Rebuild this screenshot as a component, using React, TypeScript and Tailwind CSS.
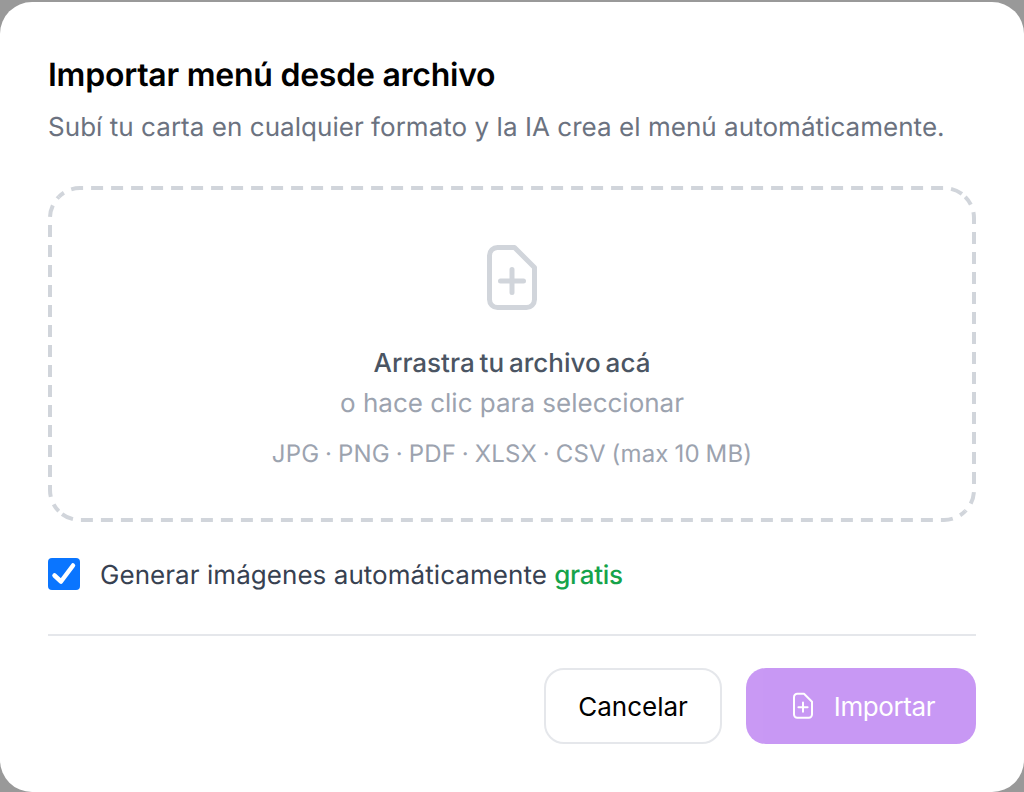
import React, { useState } from "react";

// file with a plus, same outline for the drop zone and the button
const FilePlusIcon = ({ className }: { className?: string }) => (
  <svg viewBox="0 0 60 70" fill="none" stroke="currentColor" strokeWidth="5" strokeLinecap="round" strokeLinejoin="round" className={className}>
    <path d="M15.5 4.5H32.5L52.5 24.5V56.5a8 8 0 0 1-8 8H15.5a8 8 0 0 1-8-8V12.5a8 8 0 0 1 8-8Z" />
    <path d="M30 26.5V49.5M18.5 38H41.5" />
  </svg>
);

// one stroke per side: dash phase differs from side to side on the drop zone
const dashedSides = [
  { d: "M10.79 10.79A30 30 0 0 1 32 2H896A30 30 0 0 1 917.21 10.79", offset: 5.44 },
  { d: "M917.21 10.79A30 30 0 0 1 926 32V304A30 30 0 0 1 917.21 325.21", offset: 2.44 },
  { d: "M917.21 325.21A30 30 0 0 1 896 334H32A30 30 0 0 1 10.79 325.21", offset: 5.44 },
  { d: "M10.79 325.21A30 30 0 0 1 2 304V32A30 30 0 0 1 10.79 10.79", offset: 3.44 },
];

const App: React.FC = () => {
  const [generate, setGenerate] = useState(true);

  return (
    <div className="h-[792px] w-[1024px] bg-[#999999] pt-[2px] font-['Inter',sans-serif] [text-rendering:geometricPrecision]">
      <div className="flex h-[790px] flex-col rounded-[32px] bg-white px-12 pt-[53px]">
        <h2 className="text-[32px] leading-[40px] font-semibold tracking-[-0.25px] text-black">Importar menú desde archivo</h2>
        <p className="mt-[13px] text-[26px] leading-[40px] tracking-[0.04px] text-[#6b7280]">
          Subí tu carta en cualquier formato y la IA crea el menú automáticamente.
        </p>

        <div className="relative mt-[38px] flex h-[336px] flex-col items-center pt-[57px]">
          <svg viewBox="0 0 928 336" fill="none" stroke="#d1d5db" strokeWidth="4" strokeDasharray="12 8" className="absolute inset-0 h-[336px] w-[928px]">
            {dashedSides.map((side) => (
              <path key={side.d} d={side.d} strokeDashoffset={side.offset} />
            ))}
          </svg>
          <FilePlusIcon className="h-[70px] w-[60px] text-[#d1d5db]" />
          <p className="mt-[33px] text-[26px] leading-[36px] font-medium [word-spacing:-2px] text-[#4b5563]">Arrastra tu archivo acá</p>
          <p className="mt-[4px] text-[26px] leading-[36px] text-[#9ca3af]">o hace clic para seleccionar</p>
          <p className="mt-[16px] text-[24px] leading-[32px] tracking-[0.15px] [word-spacing:-1px] text-[#9ca3af]">JPG · PNG · PDF · XLSX · CSV (max 10 MB)</p>
        </div>

        <label className="mt-[35px] flex h-[36px] items-center gap-5 text-[26px] tracking-[0.05px] text-[#374151]">
          <input type="checkbox" className="sr-only" checked={generate} onChange={(e) => setGenerate(e.target.checked)} />
          <span className={`-mt-[2px] flex h-8 w-8 items-center justify-center rounded-[4px] ${generate ? "bg-[#0a75ff]" : "border-2 border-gray-400"}`}>
            {generate && (
              <svg viewBox="0 0 32 32" className="h-8 w-8" fill="none" stroke="white" strokeWidth="4.5" strokeLinecap="round" strokeLinejoin="round">
                <path d="M6.5 17.5L13 23.5L25 7.5" />
              </svg>
            )}
          </span>
          <span>
            Generar imágenes automáticamente <span className="font-medium tracking-[-0.3px] text-[#16a34a]">gratis</span>
          </span>
        </label>

        <div className="mt-[41px] flex justify-end gap-6 border-t-2 border-[#e5e7eb] pt-8">
          <button type="button" className="h-[76px] w-[178px] rounded-[20px] border-2 border-[#e5e7eb] text-[26px] text-black">
            Cancelar
          </button>
          <button type="button" disabled className="flex h-[76px] w-[230px] items-center justify-center gap-[19px] rounded-[20px] bg-[#9333ea] pl-1 text-[26px] tracking-[-0.4px] text-white opacity-50">
            <FilePlusIcon className="h-[28px] w-[24px]" />
            Importar
          </button>
        </div>
      </div>
    </div>
  );
};

export default App;
